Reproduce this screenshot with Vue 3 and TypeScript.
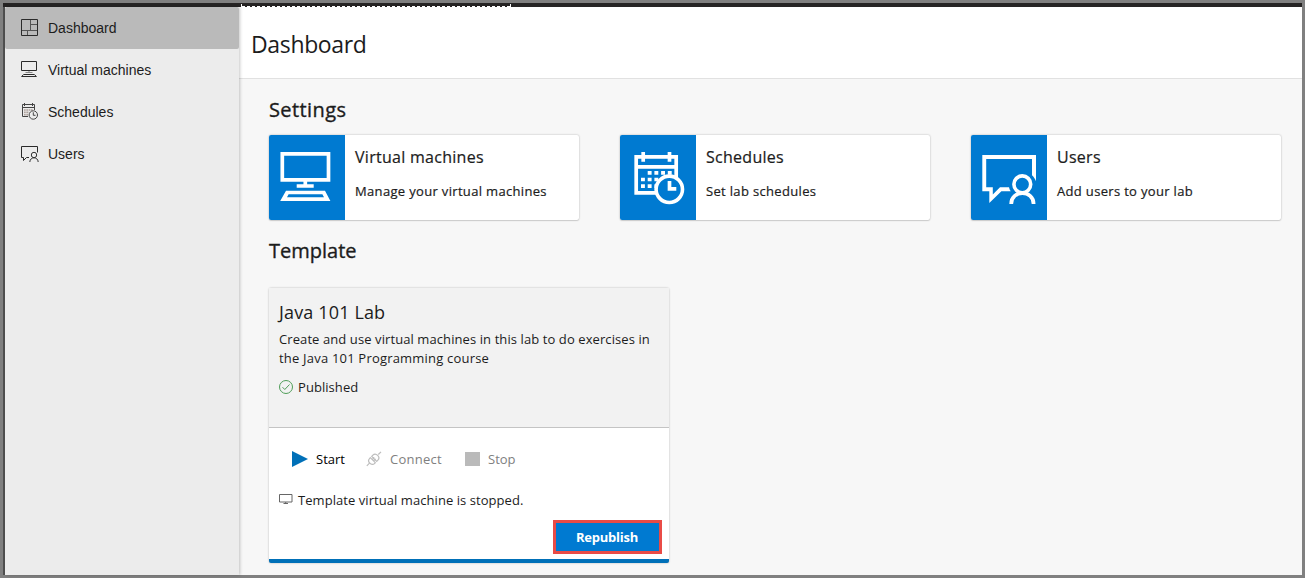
<script setup lang="ts">
import { ref } from 'vue'

type IconName = 'dashboard' | 'vm' | 'schedules' | 'users'

interface NavItem {
  id: IconName
  label: string
}

interface SettingCard {
  id: IconName
  title: string
  text: string
}

const active = ref<IconName>('dashboard')

const nav: NavItem[] = [
  { id: 'dashboard', label: 'Dashboard' },
  { id: 'vm', label: 'Virtual machines' },
  { id: 'schedules', label: 'Schedules' },
  { id: 'users', label: 'Users' },
]

const settings: SettingCard[] = [
  { id: 'vm', title: 'Virtual machines', text: 'Manage your virtual machines' },
  { id: 'schedules', title: 'Schedules', text: 'Set lab schedules' },
  { id: 'users', title: 'Users', text: 'Add users to your lab' },
]
</script>

<template>
  <div class="frame">
    <div class="topbar"><span class="dashes"></span></div>
    <div class="body">
      <nav class="sidebar">
        <a
          v-for="item in nav"
          :key="item.id"
          class="nav-item"
          :class="{ active: item.id === active }"
          @click="active = item.id"
        >
          <svg class="nav-icon" width="20" height="20" viewBox="0 0 20 20" fill="none" stroke="#2b2b2b">
            <template v-if="item.id === 'dashboard'">
              <path d="M10.500 1.500v11M1.500 12.500h16M11 6.500h6.500M7.500 12.500v5" stroke="#555" />
              <path d="M1.500 1.500h16v16h-16z" />
            </template>
            <template v-else-if="item.id === 'vm'">
              <path d="M1.500 1.500h15v9h-15z" />
              <path d="M9 11v2M5.500 12.500h7" stroke="#888" />
              <path d="M3.600 14.500h10.800l2 2H1.600z" />
            </template>
            <template v-else-if="item.id === 'schedules'">
              <path d="M8 14.500H2.500v-12h12V8M2.500 5.500h12M4.500 1v3M12.500 1v3" stroke="#444" />
              <path d="M4 8h9M4 10.300h5M4 12.600h4" stroke="#b0a39d" stroke-width="1.600" stroke-dasharray="1.700 .6" />
              <circle cx="13.300" cy="13" r="4.200" stroke="#444" />
              <path d="M13.300 10.300v3h2.200" stroke="#444" />
            </template>
            <template v-else>
              <path d="M17.500 8.500v-6h-16v11h2v3l3-3h2.500" />
              <circle cx="14" cy="11" r="2.700" stroke="#333" />
              <path d="M9.800 18c.2-5.600 8.200-5.600 8.400 0" stroke="#333" />
            </template>
          </svg>
          <span>{{ item.label }}</span>
        </a>
      </nav>

      <main class="main">
        <header class="header"><h1>Dashboard</h1></header>
        <section class="content">
          <h2 class="h-settings">Settings</h2>
          <div class="cards">
            <article v-for="card in settings" :key="card.id" class="card">
              <div class="tile">
                <svg width="76" height="85" viewBox="0 0 76 85" fill="none" stroke="#fff" stroke-width="3.7">
                  <template v-if="card.id === 'vm'">
                    <path d="M13.300 18.900h46.200v26h-46.200z" />
                    <path d="M36.300 45v6M27.700 51h17" />
                    <path
                      fill="#fff"
                      stroke="none"
                      fill-rule="evenodd"
                      d="M17 55.700h39l5.400 10.300H11.200zM19.600 59.300L18 62.200h37l-1.600-2.900z"
                    />
                  </template>
                  <template v-else-if="card.id === 'schedules'">
                    <path d="M16.200 21.900h40v36h-40zM16.200 31.900h40M23.200 17v9.700M49.500 17v9.700" />
                    <path
                      d="M27.700 37.900h24M21 44.500h17.300M21 51.200h17.300"
                      stroke-dasharray="3.900 2.800"
                    />
                    <circle cx="49.300" cy="54.300" r="13.200" fill="#007ad1" stroke-width="3.600" />
                    <path d="M49.500 46v7.900h6.800" />
                  </template>
                  <template v-else>
                    <path
                      fill="#fff"
                      stroke="none"
                      d="M11.300 20h53.700v26.200c-1-2.500-2.200-4.500-4-6V24H15.200v28.300h6.600v7.200l7.200-7.200h9c.3 1.600.9 2.800 1.700 4h-9.300L18.300 68v-11.700h-7z"
                    />
                    <circle cx="51.300" cy="49.300" r="8.400" stroke-width="3.600" />
                    <path d="M40.200 69c0-14.400 22.400-14.400 22.400 0" stroke-width="3.800" />
                  </template>
                </svg>
              </div>
              <div class="card-text">
                <h3>{{ card.title }}</h3>
                <p>{{ card.text }}</p>
              </div>
            </article>
          </div>

          <h2 class="h-template">Template</h2>
          <article class="template">
            <div class="template-info">
              <h3>Java 101 Lab</h3>
              <p class="desc">
                Create and use virtual machines in this lab to do exercises in<br /><span class="desc-end"
                  >the Java 101 Programming course</span
                >
              </p>
              <div class="published">
                <svg width="14" height="14" viewBox="0 0 14 14" fill="none" stroke="#4f9d58">
                  <circle cx="7" cy="7" r="6.500" />
                  <path d="M3.500 7.200l2.300 2.300 4.700-5" />
                </svg>
                <span>Published</span>
              </div>
            </div>
            <div class="template-body">
              <div class="actions">
                <button class="action start">
                  <svg width="16" height="16" viewBox="0 0 16 16"><path d="M0 0l16 8L0 16z" fill="#0070b8" /></svg>
                  <span>Start</span>
                </button>
                <button class="action connect" disabled>
                  <svg width="16" height="16" viewBox="0 0 16 16" fill="none" stroke="#bdbdbd" stroke-width="1.200">
                    <path
                      d="M.8 14.800l2.700-2.700M12.300 3.500L15 .8M4.300 6.700l5 5-.6.600c-3.200 3.200-8.200-1.800-5-5zM5.700 5.300l1.200-1.200c3-3 8 2 5 5l-1.200 1.200zM6.500 8.300l1.800-1.800M7.900 9.700l1.800-1.800"
                    />
                  </svg>
                  <span>Connect</span>
                </button>
                <button class="action stop" disabled>
                  <svg width="15" height="14" viewBox="0 0 15 14"><path d="M0 0h15v14H0z" fill="#bababa" /></svg>
                  <span>Stop</span>
                </button>
              </div>
              <div class="status">
                <svg width="14" height="14" viewBox="0 0 14 14" fill="none" stroke="#666">
                  <path d="M.5 1.500h12.500v7.500H.5zM4.500 10.500h4.500M6.700 9v1.500" />
                </svg>
                <span>Template virtual machine is stopped.</span>
              </div>
              <button class="republish"><span>Republish</span></button>
            </div>
          </article>
        </section>
      </main>
    </div>
  </div>
</template>

<style>
body {
  margin: 0;
  overflow: hidden;
}
</style>

<style scoped>
* {
  box-sizing: border-box;
}
.frame {
  display: flex;
  flex-direction: column;
  width: 1305px;
  height: 578px;
  border: 3px solid #808080;
  background: #f7f7f7;
  color: #1c1c1c;
  font-family: 'Open Sans', 'Noto Sans', sans-serif;
}
h1,
h2,
h3,
p {
  margin: 0;
  white-space: nowrap;
}
svg {
  display: block;
  flex: none;
}
.topbar {
  flex: none;
  height: 4px;
  padding: 1px 0 0 238px;
  background: #262424;
}
.dashes {
  display: block;
  width: 270px;
  height: 3px;
  border: solid #fff;
  border-width: 0 1px;
  background: repeating-linear-gradient(90deg, #fff 0 3px, #262424 3px 5px) 0 2px / 100% 1px no-repeat;
}
.body {
  display: flex;
  flex: 1;
  min-height: 0;
  border-left: 2px solid #505050;
}
.sidebar {
  z-index: 1;
  flex: none;
  width: 234px;
  background: #ececec;
  box-shadow: 1px 0 3px rgba(0, 0, 0, 0.22);
}
.nav-item {
  display: flex;
  align-items: center;
  height: 42px;
  padding-left: 15px;
  border-radius: 2px;
  font: 14px/20px 'Liberation Sans', Arial, sans-serif;
  cursor: pointer;
}
.nav-item.active {
  background: #bababa;
}
.nav-icon {
  margin-right: 8px;
}
.main {
  display: flex;
  flex: 1;
  flex-direction: column;
  min-width: 0;
}
.header {
  flex: none;
  height: 72px;
  padding: 19px 0 0 12px;
  border-bottom: 1px solid #e1e1e1;
  background: #fff;
}
h1 {
  font-size: 23px;
  font-weight: 400;
  line-height: 36px;
  letter-spacing: -0.35px;
}
.content {
  flex: 1;
  padding: 15px 0 0 30px;
}
h2 {
  height: 32px;
  font-size: 20px;
  font-weight: 500;
  line-height: 32px;
  -webkit-text-stroke: 0.35px currentColor;
}
.h-settings {
  letter-spacing: 0.4px;
}
.cards {
  display: flex;
  gap: 41px;
  margin-top: 9px;
}
.card {
  display: flex;
  width: 310px;
  height: 85px;
  overflow: hidden;
  border-radius: 2px;
  background: #fff;
  box-shadow: 0 0 2px rgba(0, 0, 0, 0.3), 0 1px 1px rgba(0, 0, 0, 0.1);
}
.tile {
  flex: none;
  width: 76px;
  background: #007ad1;
}
.card-text {
  padding: 10px 0 0 10px;
  -webkit-text-stroke: 0.2px currentColor;
}
.card h3 {
  font-size: 16px;
  font-weight: 500;
  line-height: 24px;
  letter-spacing: 0.28px;
}
.card p {
  margin-top: 12px;
  font-size: 13px;
  font-weight: 500;
  line-height: 20px;
  letter-spacing: 0.33px;
}
.h-template {
  margin-top: 15px;
}
.template {
  width: 400px;
  height: 275px;
  margin-top: 21px;
  border-bottom: 4px solid #0070b8;
  border-radius: 2px;
  background: #fff;
  box-shadow: 0 0 2px rgba(0, 0, 0, 0.3);
}
.template-info {
  height: 140px;
  padding: 11px 10px 0;
  border-bottom: 1px solid #c4c4c4;
  background: #f2f2f2;
}
.template h3 {
  font-size: 18px;
  font-weight: 400;
  line-height: 26px;
  letter-spacing: 0.15px;
}
.desc {
  margin-top: 5px;
  font-size: 13px;
  line-height: 19px;
  letter-spacing: 0.09px;
}
.desc-end {
  letter-spacing: 0.2px;
}
.published,
.status {
  display: flex;
  align-items: center;
  gap: 5px;
  font-size: 13px;
  line-height: 20px;
  letter-spacing: 0.06px;
}
.published {
  margin-top: 9px;
}
.template-body {
  display: flex;
  flex-direction: column;
  height: 131px;
  padding: 21px 7px 0 10px;
}
.actions {
  display: flex;
  height: 20px;
  padding-left: 13px;
}
.action {
  display: flex;
  align-items: center;
  padding: 0;
  border: 0;
  background: none;
  color: #000;
  font: 13px/20px 'Open Sans', 'Noto Sans', sans-serif;
  white-space: nowrap;
}
.action:disabled {
  color: #808080;
}
.start {
  width: 74px;
  gap: 8px;
}
.connect {
  width: 99px;
  gap: 8px;
  letter-spacing: 0.25px;
}
.stop {
  gap: 8px;
}
.status {
  margin-top: 21px;
}
.republish {
  align-self: flex-end;
  width: 109px;
  height: 34px;
  margin-top: 10px;
  padding: 0 1px 0 0;
  border: 3px solid #e94b46;
  background: #007ad1;
  color: #fff;
  font: 700 13px/20px 'Open Sans', 'Noto Sans', sans-serif;
  letter-spacing: -0.25px;
}
</style>
